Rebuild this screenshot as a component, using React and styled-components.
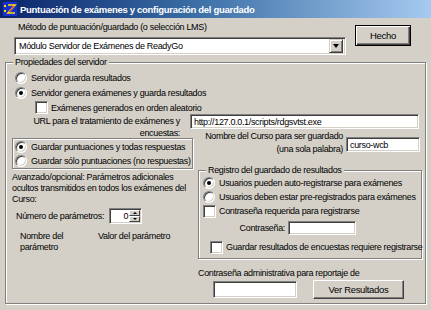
import React from 'react'
import styled, { createGlobalStyle } from 'styled-components'

const GlobalStyle = createGlobalStyle`
  html, body { margin: 0; padding: 0; background: #d4d0c8; }
  * { box-sizing: border-box; }
`;

const face = `"Liberation Sans", Arial, sans-serif`;

const Window = styled.div`
  width: 431px;
  height: 310px;
  overflow: hidden;
  background: #d4d0c8;
  font-family: ${face};
  font-size: 9px;
  letter-spacing: -0.33px;
  color: #000;
`;

const TitleBar = styled.div`
  height: 18px;
  display: flex;
  align-items: center;
  gap: 3px;
  padding-left: 3px;
  background: linear-gradient(to right, #0a246a 0%, #3a6ea5 45%, #a6caf0 100%);
  color: #fff;
  font-weight: bold;
  font-size: 9.5px;
  letter-spacing: -0.3px;
  white-space: nowrap;
`;

const TopRow = styled.div`
  display: flex;
  padding-left: 14px;
`;

const TopLeft = styled.div`
  width: 332px;
`;

const Text = styled.div`
  line-height: ${p => p.$lh || 12}px;
  white-space: nowrap;
  text-align: ${p => p.$align || 'left'};
  width: ${p => (p.$w ? p.$w + 'px' : 'auto')};
  margin-left: ${p => p.$ml || 0}px;
  margin-top: ${p => p.$mt || 0}px;
`;

const sunken = `
  background: #fff;
  border: 1px solid;
  border-color: #808080 #fff #fff #808080;
  box-shadow: inset 1px 1px 0 #404040, inset -1px -1px 0 #d4d0c8;
`;

const Combo = styled.div`
  ${sunken}
  height: 18px;
  margin-top: 3px;
  display: flex;
  align-items: center;
  padding-left: 4px;
  justify-content: space-between;
  padding-right: 2px;
`;

const ArrowBtn = styled.div`
  width: 14px;
  height: 14px;
  background: #d4d0c8;
  border: 1px solid;
  border-color: #d4d0c8 #404040 #404040 #d4d0c8;
  box-shadow: inset 1px 1px 0 #fff, inset -1px -1px 0 #808080;
  display: flex;
  align-items: center;
  justify-content: center;
  &::after {
    content: '';
    border-left: 3.5px solid transparent;
    border-right: 3.5px solid transparent;
    border-top: 4px solid #000;
  }
`;

const Button = styled.div`
  width: ${p => p.$w}px;
  height: ${p => p.$h}px;
  margin-top: ${p => p.$mt || 0}px;
  margin-left: ${p => p.$ml || 0}px;
  display: flex;
  align-items: center;
  justify-content: center;
  background: #d4d0c8;
  border: 1px solid;
  border-color: ${p => (p.$default ? '#000' : '#fff #404040 #404040 #fff')};
  box-shadow: ${p =>
    p.$default
      ? 'inset 1px 1px 0 #fff, inset -1px -1px 0 #404040, inset -2px -2px 0 #808080'
      : 'inset -1px -1px 0 #808080'};
  font-size: 9.5px;
`;

const Group = styled.div`
  position: relative;
  width: ${p => p.$w}px;
  height: ${p => p.$h}px;
  margin: ${p => p.$m || 0};
  padding: ${p => p.$pad || 0};
  border: 1px solid #808080;
  box-shadow: inset 1px 1px 0 #fff, 1px 1px 0 #fff;
`;

const Legend = styled.span`
  position: absolute;
  top: -7px;
  left: 7px;
  padding: 0 2px;
  line-height: 12px;
  background: #d4d0c8;
  white-space: nowrap;
`;

const Row = styled.div`
  display: flex;
  align-items: center;
  gap: ${p => p.$gap ?? 4}px;
  height: ${p => p.$h || 15}px;
  margin-left: ${p => p.$ml || 0}px;
  margin-top: ${p => p.$mt || 0}px;
  white-space: nowrap;
`;

const RadioDot = styled.span`
  position: relative;
  flex: none;
  width: 12px;
  height: 12px;
  border-radius: 50%;
  background: #fff;
  border: 1px solid;
  border-color: #808080 #fff #fff #808080;
  box-shadow: inset 1px 1px 0 #404040, inset -1px -1px 0 #d4d0c8;
  &::after {
    content: '';
    display: ${p => (p.$on ? 'block' : 'none')};
    position: absolute;
    left: 3px;
    top: 3px;
    width: 4px;
    height: 4px;
    border-radius: 50%;
    background: #000;
  }
`;

const CheckBox = styled.span`
  flex: none;
  width: 13px;
  height: 13px;
  ${sunken}
`;

const Field = styled.div`
  ${sunken}
  flex: none;
  width: ${p => p.$w}px;
  height: ${p => p.$h || 15}px;
  margin-top: ${p => p.$mt || 0}px;
  margin-left: ${p => p.$ml || 0}px;
  padding-left: 3px;
  display: flex;
  align-items: center;
  white-space: nowrap;
  overflow: hidden;
`;

const UrlRow = styled.div`
  display: flex;
  align-items: flex-start;
  gap: 10px;
`;

const Columns = styled.div`
  display: grid;
  grid-template-columns: 181px 224px;
  column-gap: 5px;
  margin-left: -3px;
  margin-top: -9px;
  align-items: start;
`;

const LeftCol = styled.div`
  padding-top: 8px;
`;

const RightCol = styled.div``;

const NameRow = styled.div`
  display: flex;
  align-items: flex-start;
  gap: 3px;
`;

const Spin = styled.div`
  ${sunken}
  width: 33px;
  height: 16px;
  display: flex;
  align-items: center;
  justify-content: flex-end;
  padding: 1px;
  gap: 1px;
`;

const SpinArrows = styled.div`
  display: flex;
  flex-direction: column;
  width: 11px;
  height: 12px;
`;

const SpinBtn = styled.div`
  flex: 1;
  background: #d4d0c8;
  border: 1px solid;
  border-color: #fff #404040 #404040 #fff;
  display: flex;
  align-items: center;
  justify-content: center;
  &::after {
    content: '';
    border-left: 2px solid transparent;
    border-right: 2px solid transparent;
    ${p => (p.$up ? 'border-bottom: 2px solid #000;' : 'border-top: 2px solid #000;')}
  }
`;

const ParamHead = styled.div`
  display: flex;
  margin-top: 7px;
  margin-left: 8px;
  line-height: 11px;
`;

const BottomRow = styled.div`
  display: flex;
  align-items: center;
  margin-top: 1px;
`;

function AppIcon() {
  return (
    <svg width="14" height="14" viewBox="0 0 14 14">
      <rect width="14" height="14" fill="#1a2fd0" />
      <rect x="1" y="3" width="2" height="2" fill="#ffe000" />
      <rect x="1" y="8" width="2" height="2" fill="#ffe000" />
      <path d="M5 3 H12 L5 11 H12" stroke="#ffe000" strokeWidth="1.6" fill="none" />
      <path d="M11 4 L6 10" stroke="#e02020" strokeWidth="1" />
    </svg>
  );
}

function Radio({ on, children, ...rest }) {
  return (
    <Row {...rest}>
      <RadioDot $on={on} />
      <span>{children}</span>
    </Row>
  );
}

function Check({ children, ...rest }) {
  return (
    <Row $gap={3} {...rest}>
      <CheckBox />
      <span>{children}</span>
    </Row>
  );
}

export default function App() {
  return (
    <Window>
      <GlobalStyle />
      <TitleBar>
        <AppIcon />
        <span>Puntuación de exámenes y configuración del guardado</span>
      </TitleBar>

      <TopRow>
        <TopLeft>
          <Text $ml={4} $mt={3} $lh={13}>Método de puntuación/guardado (o selección LMS)</Text>
          <Combo>
            <span>Módulo Servidor de Exámenes de ReadyGo</span>
            <ArrowBtn />
          </Combo>
        </TopLeft>
        <Button $default $w={56} $h={21} $mt={7} $ml={9}>Hecho</Button>
      </TopRow>

      <Group $w={421} $h={242} $m="7px 0 0 5px" $pad="7px 3px 0 9px">
        <Legend>Propiedades del servidor</Legend>
        <Radio>Servidor guarda resultados</Radio>
        <Radio on>Servidor genera exámenes y guarda resultados</Radio>
        <Check $ml={20}>Exámenes generados en orden aleatorio</Check>

        <UrlRow>
          <Text $w={165} $align="right">
            URL para el tratamiento de exámenes y<br />encuestas:
          </Text>
          <Field $w={229} $mt={-1}>http://127.0.0.1/scripts/rdgsvtst.exe</Field>
        </UrlRow>

        <Columns>
          <LeftCol>
            <Group $w={181} $h={31} $pad="1px 0 0 2px">
              <Radio $h={14} on>Guardar puntuaciones y todas respuestas</Radio>
              <Radio $h={14}>Guardar sólo puntuaciones (no respuestas)</Radio>
            </Group>
            <Text $lh={11} $mt={3}>
              Avanzado/opcional: Parámetros adicionales<br />
              ocultos transmitidos en todos los exámenes del<br />
              Curso:
            </Text>
            <Row $h={16} $mt={3} $ml={4} $gap={5}>
              <span>Número de parámetros:</span>
              <Spin>
                <span>0</span>
                <SpinArrows>
                  <SpinBtn $up />
                  <SpinBtn />
                </SpinArrows>
              </Spin>
            </Row>
            <ParamHead>
              <Text $w={78} $lh={11}>Nombre del<br />parámetro</Text>
              <Text $lh={11}>Valor del parámetro</Text>
            </ParamHead>
          </LeftCol>

          <RightCol>
            <NameRow>
              <Text $w={145} $align="right" $lh={12.5}>
                Nombre del Curso para ser guardado<br />(una sola palabra)
              </Text>
              <Field $w={74} $mt={7}>curso-wcb</Field>
            </NameRow>
            <Group $w={224} $h={89} $m="15px 0 0 0" $pad="5px 0 0 4px">
              <Legend>Registro del guardado de resultados</Legend>
              <Radio $h={14} on>Usuarios pueden auto-registrarse para exámenes</Radio>
              <Radio $h={14}>Usuarios deben estar pre-registrados para exámenes</Radio>
              <Check $h={14}>Contraseña requerida para registrarse</Check>
              <Row $h={16} $mt={2} $gap={3}>
                <Text $w={82} $align="right">Contraseña:</Text>
                <Field $w={68} $h={14} />
              </Row>
              <Check $h={14} $mt={4} $ml={7}>Guardar resultados de encuestas requiere registrarse</Check>
            </Group>
            <Text $mt={8}>Contraseña administrativa para reportaje de</Text>
            <BottomRow>
              <Field $w={84} $h={17} $ml={15} />
              <Button $w={91} $h={19} $ml={16}>Ver Resultados</Button>
            </BottomRow>
          </RightCol>
        </Columns>
      </Group>
    </Window>
  );
}
